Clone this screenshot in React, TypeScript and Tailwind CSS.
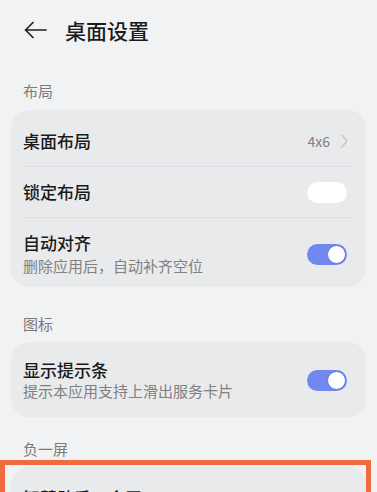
import React from "react";

const font = { fontFamily: '"Noto Sans CJK SC", "Noto Sans", sans-serif' };

function Toggle({ on }: { on: boolean }) {
  if (!on) {
    return <div className="w-[40px] h-[21px] rounded-full bg-white" />;
  }
  return (
    <div className="w-[40px] h-[21px] rounded-full bg-[#7189ef] flex items-center justify-end pr-[1px]">
      <div className="w-[19px] h-[19px] rounded-full bg-white border border-[#5f78e3]" />
    </div>
  );
}

function Divider() {
  return <div className="h-px bg-[#dcdde0] ml-[12px] mr-[14px]" />;
}

function SectionLabel({ text, pt, pb }: { text: string; pt: string; pb: string }) {
  return (
    <div className={`px-[23px] text-[15px] leading-[20px] text-[#7b7b7b] ${pt} ${pb}`}>{text}</div>
  );
}

export default function App() {
  return (
    <div className="relative w-[377px] h-[492px] overflow-hidden bg-[#f1f2f4]" style={font}>
      {/* Header */}
      <div className="h-[60px] flex items-center">
        <svg className="ml-[24px]" width="23" height="18" viewBox="0 0 23 18" fill="none">
          <path d="M22 9H1.5M9 1.5L1.5 9L9 16.5" stroke="#1f1f1f" strokeWidth="1.7" strokeLinecap="round" strokeLinejoin="round" />
        </svg>
        <div className="ml-[18px] text-[21px] leading-[28px] font-medium text-[#1c1c1c]">桌面设置</div>
      </div>

      <SectionLabel text="布局" pt="pt-[21px]" pb="pb-[9px]" />
      <div className="mx-[11px] rounded-[18px] bg-[#e9eaec] pt-[6px] pb-[6px]">
        <div className="h-[50px] flex items-center pl-[12px] pr-[18px]">
          <div className="flex-1 text-[17px] leading-[22px] font-medium text-[#1a1a1a]">桌面布局</div>
          <div className="text-[14px] leading-[20px] text-[#808080]">4x6</div>
          <svg className="ml-[11px]" width="7" height="14" viewBox="0 0 7 14" fill="none">
            <path d="M1 1L6 7L1 13" stroke="#c4c4c6" strokeWidth="1.3" strokeLinecap="round" strokeLinejoin="round" />
          </svg>
        </div>
        <Divider />
        <div className="h-[50px] flex items-center pl-[12px] pr-[19px]">
          <div className="flex-1 text-[17px] leading-[22px] font-medium text-[#1a1a1a]">锁定布局</div>
          <Toggle on={false} />
        </div>
        <Divider />
        <div className="flex items-center pl-[12px] pr-[19px] pt-[14px] pb-[5px]">
          <div className="flex-1">
            <div className="text-[17px] leading-[22px] font-medium text-[#1a1a1a]">自动对齐</div>
            <div className="mt-[2px] text-[15px] leading-[20px] text-[#808080]">删除应用后，自动补齐空位</div>
          </div>
          <Toggle on={true} />
        </div>
      </div>

      <SectionLabel text="图标" pt="pt-[27px]" pb="pb-[8px]" />
      <div className="mx-[11px] rounded-[18px] bg-[#e9eaec] py-[6px]">
        <div className="flex items-center pl-[12px] pr-[19px] pt-[11px] pb-[10px]">
          <div className="flex-1">
            <div className="text-[17px] leading-[22px] font-medium text-[#1a1a1a]">显示提示条</div>
            <div className="text-[15px] leading-[20px] text-[#808080]">提示本应用支持上滑出服务卡片</div>
          </div>
          <Toggle on={true} />
        </div>
      </div>

      <SectionLabel text="负一屏" pt="pt-[22px]" pb="pb-[8px]" />
      <div className="mx-[11px] rounded-[18px] bg-[#e9eaec] py-[6px]">
        <div className="flex items-center pl-[12px] pr-[19px] pt-[14px] pb-[7px]">
          <div className="flex-1">
            <div className="text-[17px] leading-[22px] font-medium text-[#1a1a1a]">智慧助手·今天</div>
            <div className="mt-[2px] text-[15px] leading-[20px] text-[#808080]">在桌面左侧显示负一屏</div>
          </div>
          <Toggle on={true} />
        </div>
      </div>

      {/* Orange highlight annotation */}
      <div className="absolute left-0 top-[460px] w-[371px] h-[80px] border-[5px] border-[#f06c3d] pointer-events-none" />
    </div>
  );
}
